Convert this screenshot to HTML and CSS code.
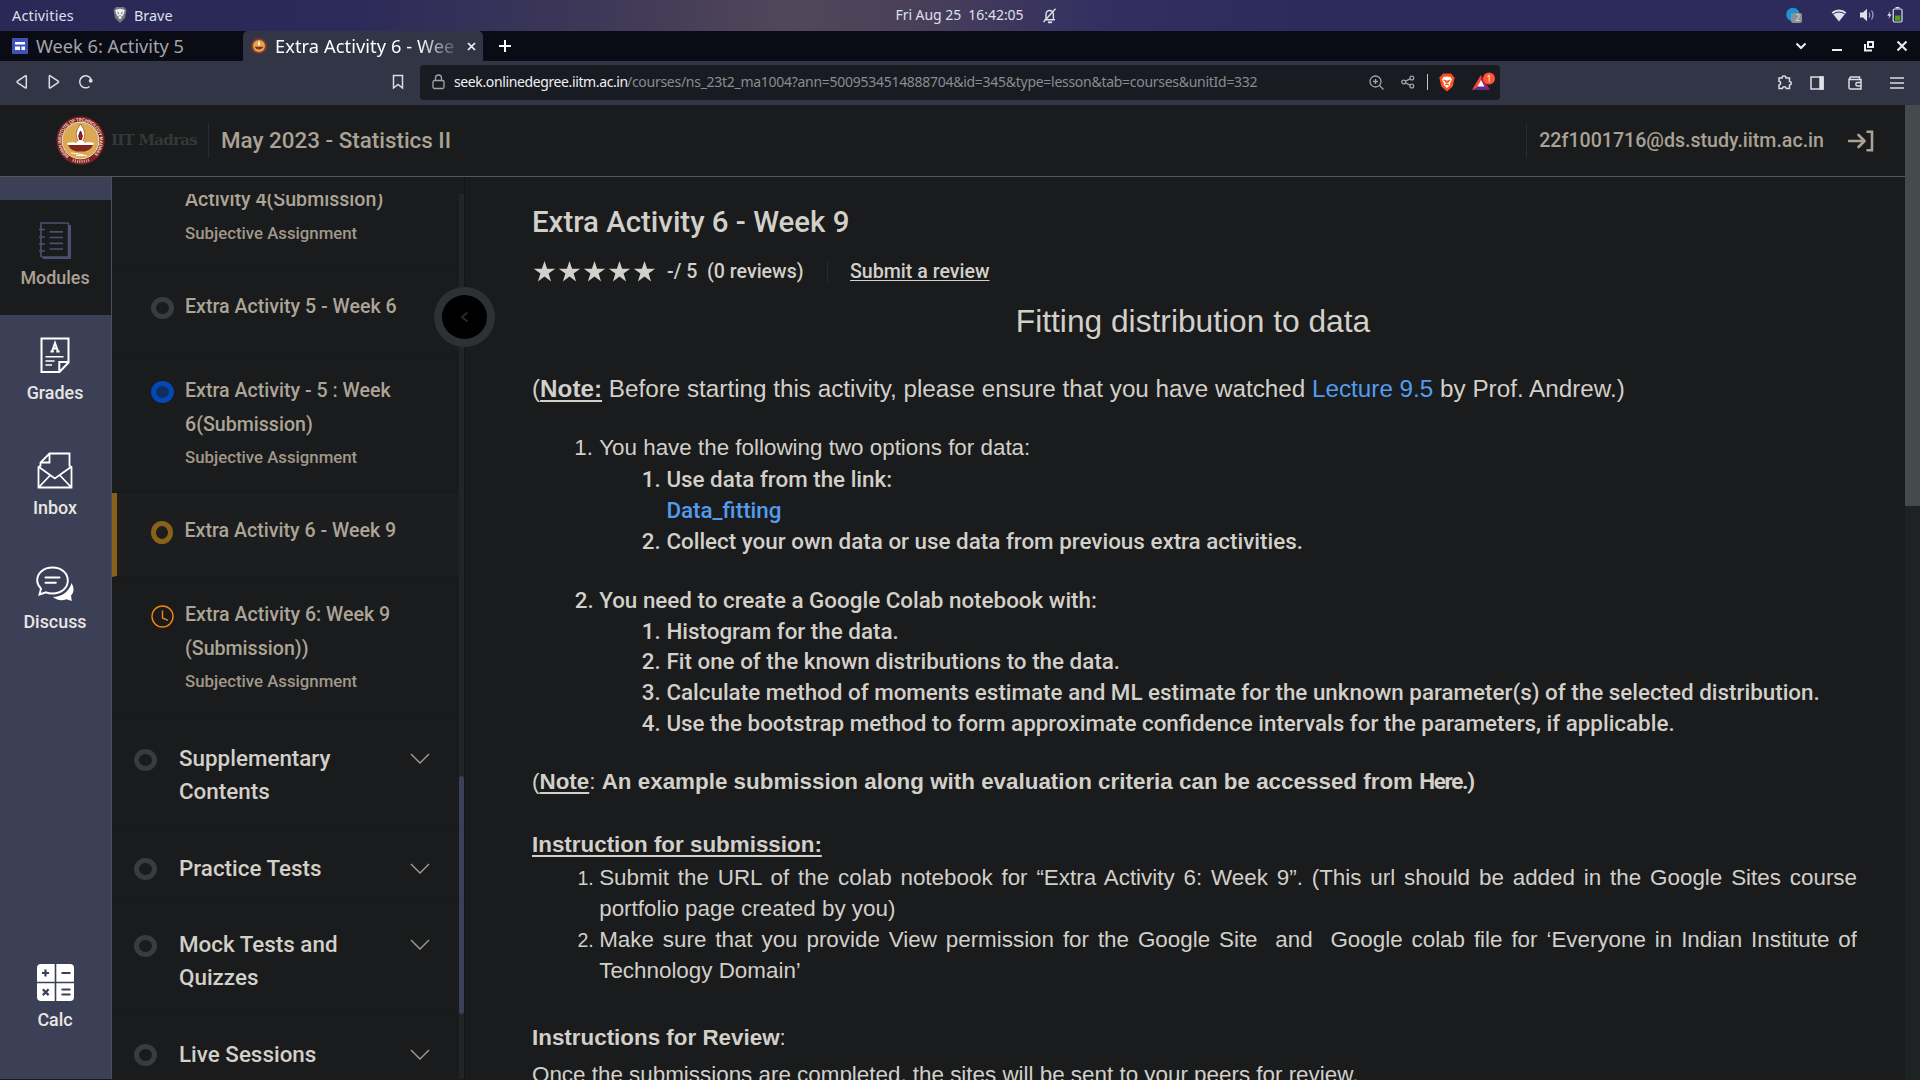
FILE: index.html
```html
<!DOCTYPE html>
<html lang="en">
<head>
<meta charset="utf-8">
<title>Extra Activity 6 - Week 9</title>
<link rel="stylesheet" href="styles.css">
</head>
<body>
<div class="topbar">
  <div class="topbar-side">
    <span class="activities">Activities</span>
    <svg class="lion" width="14" height="17" viewBox="0 0 14 17"><path d="M3 1h8l2.500 3-1.500 8-5 5-5-5L.5 4z" fill="#77787c"/><path d="M3.500 3.500l3.500-.8 3.500.8 1.300 1.500-1.500 3.800L7 13.500 3.700 8.800 2.200 5z" fill="#f4f4f4"/><path d="M4 6l2 1-1 1.500M10 6L8 7l1 1.500M5.500 10.500L7 9.500l1.500 1" stroke="#77787c" stroke-width=".9" fill="none"/></svg>
    <span class="app-name">Brave</span>
  </div>
  <div class="clock">
    <span class="clock-text">Fri Aug 25  16:42:05</span>
    <svg width="15" height="16" viewBox="0 0 15 16" fill="none" stroke="#dfe0ea" stroke-width="1.400"><path d="M2.500 11.800h10.500M4 11.500V6.200a3.700 3.700 0 0 1 7.400 0v5.300M13.500.8L1.500 14"/><path d="M6 14.300h4" stroke-width="1.800"/></svg>
  </div>
  <div class="tray">
    <svg class="tray-globe" width="16" height="16" viewBox="0 0 16 16"><circle cx="7" cy="7.500" r="6.800" fill="#1f93d2"/><rect x="5" y="6" width="11" height="10" rx="2" fill="#8d9196"/><text x="9.500" y="14" font-size="8" fill="#ddd" font-family="Noto Sans, sans-serif">2</text></svg>
    <svg class="tray-wifi" width="16" height="13" viewBox="0 0 16 13"><path d="M8 12.500L.6 3.300a11.500 11.500 0 0 1 14.800 0z" fill="#dfe0ea"/><path d="M2.200 5a9.500 9.500 0 0 1 11.600 0" stroke="#302d60" fill="none"/></svg>
    <svg class="tray-volume" width="15" height="14" viewBox="0 0 15 14"><path d="M0 4.500h3L7 .8v12.400L3 9.500H0z" fill="#dfe0ea"/><path d="M9 4.500q1.500 2.500 0 5M11.500 2.500q3 4.500 0 9" stroke="#a5a6bd" stroke-width="1.200" fill="none"/></svg>
    <svg class="tray-battery" width="16" height="16" viewBox="0 0 16 16"><path d="M3.200 4L.3 8.800h2L1.500 12l3-4.700h-2z" fill="#dfe0ea"/><path d="M8.500.7h4" stroke="#dfe0ea" stroke-width="1.400"/><rect x="6.200" y="2" width="8.800" height="13" rx="1.500" fill="none" stroke="#dfe0ea" stroke-width="1.200"/><path d="M8 8.500h5.300v5.200H8z" fill="#4fa30a"/></svg>
  </div>
</div>

<div class="tabstrip">
  <div class="tab">
    <svg width="16" height="16" viewBox="0 0 16 16"><path d="M0 0h16v16H0z" fill="#3f51b5"/><path d="M3 4h10v2.500H3zM3 8.500h5V12H3zM9.500 8.500H13V12H9.500z" fill="#fff"/></svg>
    <span class="tab-title">Week 6: Activity 5</span>
  </div>
  <div class="tab tab-active">
    <svg width="16" height="16" viewBox="0 0 16 16"><circle cx="8" cy="8" r="7.800" fill="#8a3a2a"/><circle cx="8" cy="8" r="6" fill="#e0a74b"/><path d="M8 2.800q2 3 0 5.500-2-2.500 0-5.500z" fill="#fff"/><path d="M3.500 8.700h9Q11 11.500 8 11.500T3.500 8.700z" fill="#8b2a1e"/></svg>
    <span class="tab-title tab-title-active">Extra Activity 6 - Wee</span>
    <svg class="tab-close" width="9" height="9" viewBox="0 0 9 9"><path d="M1 1l7 7M8 1L1 8" stroke="#f2f2f5" stroke-width="1.700"/></svg>
  </div>
  <svg class="new-tab" width="12" height="12" viewBox="0 0 12 12"><path d="M6 0v12M0 6h12" stroke="#fff" stroke-width="2"/></svg>
  <div class="window-buttons">
    <svg width="12" height="12" viewBox="0 0 12 12"><path d="M1.500 3.500L6 8l4.500-4.500" stroke="#eee" stroke-width="2" fill="none"/></svg>
    <svg class="minimize" width="12" height="12" viewBox="0 0 12 12"><path d="M1 10h10" stroke="#eee" stroke-width="2"/></svg>
    <svg class="restore" width="12" height="12" viewBox="0 0 12 12"><path d="M5 2h5v5H5zM2 4v6.500h7" stroke="#eee" stroke-width="2" fill="none"/></svg>
    <svg class="close" width="12" height="12" viewBox="0 0 12 12"><path d="M1.500 1.500l9 9M10.500 1.500l-9 9" stroke="#eee" stroke-width="2"/></svg>
  </div>
</div>

<div class="toolbar">
  <div class="nav-buttons">
    <svg width="12" height="16" viewBox="0 0 12 16"><path d="M10.300 2.200q0-1-1 -.3L1.500 7q-1 .8 0 1.600l7.800 5.200q1 .7 1-.3z"/></svg>
    <svg width="12" height="16" viewBox="0 0 12 16"><path d="M1.300 2.200q0-1 1-.3L10.100 7q1 .8 0 1.600l-7.800 5.200q-1 .7-1-.3z"/></svg>
    <svg width="16" height="16" viewBox="0 0 16 16"><path d="M11.500 12.500A6 6 0 1 1 13 5v1.500"/><circle cx="12.700" cy="6.700" r="1.200" fill="#e4e4ea"/></svg>
  </div>
  <svg class="bookmark" width="12" height="16" viewBox="0 0 12 16"><path d="M1.500 1.500h9v12.500L6 10.500 1.500 14z"/></svg>
  <div class="urlbox">
    <svg class="lock" width="13" height="16" viewBox="0 0 13 16"><rect x="1" y="6.500" width="11" height="8" rx="1.500"/><path d="M3.500 6.500V4a3 3 0 0 1 6 0v2.500"/></svg>
    <span class="url-host">seek.onlinedegree.iitm.ac.in</span><span class="url-path">/courses/ns_23t2_ma1004?ann=5009534514888704&amp;id=345&amp;type=lesson&amp;tab=courses&amp;unitId=332</span>
    <svg class="url-zoom" width="15" height="15" viewBox="0 0 15 15"><circle cx="6.500" cy="6.500" r="5.500"/><path d="M10.500 10.500l4 4M4 6.500h5M6.500 4v5"/></svg>
    <svg class="url-share" width="14" height="14" viewBox="0 0 14 14"><circle cx="2.700" cy="7" r="1.900"/><circle cx="10.800" cy="3" r="1.900"/><circle cx="10.800" cy="11" r="1.900"/><path d="M4.400 6.200l4.700-2.300M4.400 7.800l4.700 2.300"/></svg>
    <span class="url-divider"></span>
    <svg class="shield" width="16" height="19" viewBox="0 0 16 19"><path d="M4 .5h8L14 3l1.700 1.500-2 9L8 18.500l-5.700-5-2-9L2 3z" fill="#fb4f1d"/><path d="M4.500 4L8 3.400l3.500.6L13 6.500l-2 4 .3 1.500L8 15l-3.300-3 .3-1.500-2-4z" fill="#fff"/><path d="M4.500 7l2.500.8L6.300 9.500M11.500 7L9 7.800l.7 1.700M8 8v3.500M6 12l2-1 2 1" stroke="#fb4f1d" fill="none"/></svg>
    <svg class="rewards" width="24" height="20" viewBox="0 0 24 20"><path d="M9 3l9 15H0z" fill="#5b2e91"/><path d="M9 3L0 18l5-2.500L9 8z" fill="#ff4724"/><path d="M9 3l9 15-5-2.500L9 8z" fill="#9e1f63"/><path d="M9 8l3.500 6.500h-7z" fill="#fff"/><circle cx="17" cy="6.500" r="6" fill="#ff5630"/><text x="17" y="9.800" font-size="9" fill="#fff" text-anchor="middle" font-family="Noto Sans, sans-serif">1</text></svg>
  </div>
  <div class="ext-buttons">
    <svg width="15" height="15" viewBox="0 0 15 15"><path d="M2 3h3a2 2 0 1 1 4 0h3.500v3.500a1.800 1.800 0 1 1 0 3.600v3.500H9.300q-.3-1.800-2-1.800t-2 1.800H2V10q1.700-.3 1.700-1.900T2 6.300z"/></svg>
    <svg class="ext-panel" width="14" height="14" viewBox="0 0 14 14"><rect x="1" y="1" width="12" height="12"/><path d="M10 1h3v12h-3z" fill="#e4e4ea"/></svg>
    <svg class="ext-wallet" width="14" height="14" viewBox="0 0 14 14"><path d="M11.500 3.500V1H2.500a1.500 1.500 0 0 0 0 2.500H13V13H2.500A1.500 1.500 0 0 1 1 11.500v-9M13 6.500H9.500a1.700 1.700 0 0 0 0 3.400H13"/></svg>
    <svg class="ext-menu" width="14" height="14" viewBox="0 0 14 14"><path d="M0 2h14M0 7h14M0 12h14"/></svg>
  </div>
</div>

<div class="viewport">
  <div class="page">
    <header class="header">
      <svg class="logo" width="49" height="49" viewBox="0 0 49 49">
        <defs><path id="rim" d="M13.200 40A19.200 19.200 0 1 1 35.800 40"/></defs>
        <circle cx="24.500" cy="24.500" r="24.200" fill="#7c211b"/>
        <text class="rim-text" textLength="93"><textPath href="#rim" textLength="93">INDIAN INSTITUTE OF TECHNOLOGY MADRAS</textPath></text>
        <path d="M33 43.800A21.200 21.200 0 0 1 16 43.800" fill="none" stroke="#e0c6bb" stroke-width="3" stroke-dasharray="1.200 1" opacity=".8"/>
        <circle cx="24.500" cy="24.500" r="18.400" fill="#dca851" stroke="#f1e3c8" stroke-width="1"/>
        <path d="M24.500 8q7.500 10 1.800 18h-3.600q-5.700-8 1.800-18z" fill="#fff" stroke="#5e2018" stroke-width=".5"/>
        <path d="M24.500 15q3 5 1 8.500h-2q-2-3.500 1-8.500z" fill="#c1121c" stroke="#4a2014"/>
        <path d="M11 27q6-1.500 9.500 0l1.200-2h5.600l1.200 2q3.500-1.500 9.500 0-1 4-8 6.500H19q-7-2.500-8-6.500z" fill="#fff"/>
        <path d="M12 29h25q-2 5-8.500 6.500h-8Q14 34 12 29z" fill="#84261b"/>
        <path d="M15 37l8 1 8 2M20 39.500l8 .2" stroke="#fff" stroke-width="1" fill="none"/>
      </svg>
      <span class="brand">IIT Madras</span>
      <span class="course">May 2023 - Statistics II</span>
      <span class="account">22f1001716@ds.study.iitm.ac.in</span>
      <svg class="logout" width="26" height="24" viewBox="0 0 26 24" fill="none" stroke="#aaa294" stroke-width="2.600"><path d="M1 12h15M10.500 6l6 6-6 6" stroke-linecap="round" stroke-linejoin="round"/><path d="M19.500 2.700H24v18.600h-4.500" stroke-linecap="round"/></svg>
    </header>
    <div class="body">
      <nav class="rail">
        <div class="rail-item rail-current">
          <svg width="32" height="37" viewBox="0 0 32 37" fill="none" stroke="#4a5173" stroke-width="1.600"><path d="M2 1h26.500q1 0 1 1v33H3q-1 0-1-1zM30.500 3v32.500M5 36h26" /><path d="M31 3v33H4" stroke-width="2"/><path d="M0 7.500h6M0 15h6M0 22h6M0 29h6M10.500 9.800H24M10.500 15.500H24M10.500 21.300H24M10.500 27H24" stroke-width="1.700"/></svg>
          <span>Modules</span>
        </div>
        <div class="rail-item">
          <svg width="30" height="37" viewBox="0 0 30 37" fill="none" stroke="#fff" stroke-width="2"><path d="M1.500 1.500h27v24l-9 9.500h-18zM28.500 25h-9.200v10"/><path d="M5.500 19.800h18M5.500 24h9M5.500 28H12" stroke-width="1.500"/><path d="M10.500 14.500h3.300M16.300 14.500h3.300M12 14.500l3-8.500 3 8.500M13 11.500h4" stroke-width="2"/></svg>
          <span>Grades</span>
        </div>
        <div class="rail-item">
          <svg width="36" height="37" viewBox="0 0 36 37" fill="none" stroke="#fff" stroke-width="1.800"><path d="M3.500 14V10.500L12.500 1.500h20V14M12.500 1.500v9h-9"/><path d="M4 13.500L1.500 15v20.500h33V15l-2.500-1.500M2 15l15.800 11.500L34 15M2 35l11-11.500M34 35L23 23.500"/></svg>
          <span>Inbox</span>
        </div>
        <div class="rail-item">
          <svg width="38" height="37" viewBox="0 0 38 37"><path d="M35.500 17c3 5 2.500 9.500-.5 12.500l.8 5.500-5.300-1.700c-5 1.700-10.500.8-13.500-2.300C25 31 33 26 35.500 17z" fill="#fff"/><path d="M16.500 1.500c9 0 15.300 5.500 15.300 13S25.500 27.500 16.500 27.500c-2.500 0-4.500-.3-6.500-1.200L3.500 28.500l1.500-5.800C2.500 20 1.200 18 1.200 14.500c0-7.500 6.300-13 15.300-13z" fill="#3c4056" stroke="#fff" stroke-width="1.900"/><path d="M9.500 11.500h14M9.500 16.800h10.300" stroke="#fff" stroke-width="2" stroke-linecap="round"/></svg>
          <span>Discuss</span>
        </div>
        <div class="rail-item rail-bottom">
          <svg width="37" height="37" viewBox="0 0 37 37"><rect width="37" height="37" rx="4" fill="#fff"/><path d="M18.500 0v37M0 18.500h37" stroke="#3c4056" stroke-width="1.600"/><path d="M5 9h7M8.500 5.500v7M24.500 9h9M5.800 25.300l5.800 5.800M11.600 25.300l-5.800 5.800M24.500 25.500h9M24.500 30.500h9" stroke="#3c4056" stroke-width="2.200"/></svg>
          <span>Calc</span>
        </div>
      </nav>

      <aside class="lessons">
        <div class="lesson-list">
          <div class="lesson lesson-first"><div class="lesson-text"><p>Activity 4(Submission)</p><p class="kind">Subjective Assignment</p></div></div>
          <div class="lesson"><span class="ring"></span><div class="lesson-text"><p>Extra Activity 5 - Week 6</p></div></div>
          <div class="lesson"><span class="ring ring-done"></span><div class="lesson-text"><p>Extra Activity - 5 : Week<br>6(Submission)</p><p class="kind">Subjective Assignment</p></div></div>
          <div class="lesson lesson-active"><span class="ring ring-active"></span><div class="lesson-text"><p>Extra Activity 6 - Week 9</p></div></div>
          <div class="lesson"><svg class="due" width="23" height="23" viewBox="0 0 23 23" fill="none" stroke="#ef860b" stroke-width="1.400"><circle cx="11.500" cy="11.500" r="10.500"/><path d="M11.500 5.500V13l5.500 2.300"/></svg><div class="lesson-text"><p>Extra Activity 6: Week 9<br>(Submission))</p><p class="kind">Subjective Assignment</p></div></div>
          <div class="section"><span class="ring"></span><p>Supplementary<br>Contents</p><svg class="chev" width="20" height="11" viewBox="0 0 20 11"><path d="M1 1l9 9 9-9"/></svg></div>
          <div class="section"><span class="ring"></span><p>Practice Tests</p><svg class="chev" width="20" height="11" viewBox="0 0 20 11"><path d="M1 1l9 9 9-9"/></svg></div>
          <div class="section"><span class="ring"></span><p>Mock Tests and<br>Quizzes</p><svg class="chev" width="20" height="11" viewBox="0 0 20 11"><path d="M1 1l9 9 9-9"/></svg></div>
          <div class="section"><span class="ring"></span><p>Live Sessions</p><svg class="chev" width="20" height="11" viewBox="0 0 20 11"><path d="M1 1l9 9 9-9"/></svg></div>
        </div>
        <div class="list-track"><div class="list-thumb"></div></div>
        <div class="collapse"><svg width="9" height="12" viewBox="0 0 9 12"><path d="M7.500 1.500L2 6l5.500 4.500" stroke="#26292b" stroke-width="2" fill="none"/></svg></div>
      </aside>

      <main class="content">
        <h1>Extra Activity 6 - Week 9</h1>
        <div class="rating">
          <svg class="stars" width="124" height="22" viewBox="0 0 124 22" fill="#d3cfc9"><defs><path id="star" d="M11.500 0l2.600 7.800h8.100l-6.600 4.800 2.500 7.800-6.600-4.800-6.600 4.800 2.500-7.800L.8 7.800h8.100z"/></defs><use href="#star"/><use href="#star" x="25"/><use href="#star" x="50"/><use href="#star" x="75"/><use href="#star" x="100"/></svg>
          <span class="score">-/ 5</span>
          <span class="reviews">(0 reviews)</span>
          <span class="submit-review">Submit a review</span>
        </div>
        <h2>Fitting distribution to data</h2>
        <p class="note">(<b><u>Note:</u></b> Before starting this activity, please ensure that you have watched <a>Lecture 9.5</a> by Prof. Andrew.)</p>
        <ol class="steps">
          <li>You have the following two options for data:
            <ol>
              <li>Use data from the link:<br><a>Data_fitting</a></li>
              <li>Collect your own data or use data from previous extra activities.</li>
            </ol>
          </li>
          <li class="medium">You need to create a Google Colab notebook with:
            <ol>
              <li>Histogram for the data.</li>
              <li>Fit one of the known distributions to the data.</li>
              <li>Calculate method of moments estimate and ML estimate for the unknown parameter(s) of the selected distribution.</li>
              <li>Use the bootstrap method to form approximate confidence intervals for the parameters, if applicable.</li>
            </ol>
          </li>
        </ol>
        <p class="example">(<b><u>Note</u></b>: <b>An example submission along with evaluation criteria can be accessed from <span class="here">Here.)</span></b></p>
        <p class="instruction"><b><u>Instruction for submission:</u></b></p>
        <ol class="submission">
          <li><span>Submit the URL of the colab notebook for “Extra Activity 6: Week 9”. (This url should be added in the Google Sites course portfolio page created by you)</span></li>
          <li><span>Make sure that you provide View permission for the Google Site&nbsp; and&nbsp; Google colab file for ‘Everyone in Indian Institute of Technology Domain’</span></li>
        </ol>
        <p class="review-head"><b>Instructions for Review</b>:</p>
        <p class="review-text">Once the submissions are completed, the sites will be sent to your peers for review.</p>
      </main>
    </div>
  </div>
  <div class="page-track"><div class="page-thumb"></div></div>
</div>
</body>
</html>
```
FILE: styles.css
```css
* { box-sizing: border-box; }
body { margin: 0; width: 1920px; height: 1080px; overflow: hidden; display: flex; flex-direction: column; background: #191b1c; font-family: Roboto, sans-serif; color: #d3cfc9; }
svg { display: block; flex: none; }
p, h1, h2, ol { margin: 0; padding: 0; font-weight: inherit; }

/* desktop bar */
.topbar { flex: none; height: 31px; display: grid; grid-template-columns: 1fr auto 1fr; align-items: start; background: linear-gradient(90deg, #2a2857 0, #2c2a59 350px, #3e3858 600px, #52475a 790px, #4a4159 900px, #332f61 1100px, #2d2b5c 1300px, #2d2b5c 100%); color: #dfe0ea; font: 14.400px/20px "Noto Sans", sans-serif; }
.topbar-side { display: flex; padding: 6px 0 0 12px; }
.activities { letter-spacing: .2px; width: 101px; }
.app-name { letter-spacing: 0; margin-left: 7px; }
.clock { display: flex; padding: 5px 0 0 32px; gap: 18px; font-size: 14px; }
.clock svg { margin-top: 3px; }
.clock-text { white-space: pre; width: 128px; letter-spacing: -.05px; }
.tray { display: flex; justify-content: flex-end; padding: 7px 17px 0 0; }
.tray-globe { margin-right: 29px; }
.tray-wifi { margin: 2px 13px 0 0; }
.tray-volume { margin: 1px 12px 0 0; }

/* tabs */
.tabstrip { flex: none; height: 30px; display: flex; background: #0b0b15; font: 18.200px/30px "Noto Sans", sans-serif; color: #a3a4ab; }
.tab { display: flex; width: 243px; padding-left: 12px; }
.tab svg { margin-top: 7px; }
.tab-title { margin: 0 0 0 8px; white-space: nowrap; }
.tab-active { width: 240px; padding-left: 8px; background: #323545; border-radius: 5px 5px 0 0; color: #fff; }
.tab-title-active { width: 184px; letter-spacing: .1px; -webkit-mask-image: linear-gradient(90deg, #000 78%, transparent 102%); mask-image: linear-gradient(90deg, #000 78%, transparent 102%); }
.tab .tab-close { margin: 11px 0 0 8px; }
.new-tab { margin: 9px 0 0 16px; }
.window-buttons { display: flex; margin: 9px 12px 0 auto; }
.minimize { margin-left: 24px; }
.restore { margin-left: 20px; }
.close { margin-left: 21px; }

/* toolbar */
.toolbar { flex: none; height: 44px; display: flex; background: #323545; }
.toolbar svg { fill: none; stroke: #dcdce3; stroke-width: 1.500; }
.nav-buttons { display: flex; gap: 20px; width: 376px; padding: 13px 0 0 16px; }
.nav-buttons svg:last-child { margin-left: -2px; }
.bookmark { margin: 13px 16px 0 16px; }
.urlbox { width: 1080px; height: 35px; margin-top: 4px; display: flex; border-radius: 4px; background: #191b22; font: 14px/34px "Noto Sans", sans-serif; white-space: nowrap; }
.toolbar .urlbox svg { stroke: #a2a3a9; stroke-width: 1.300; }
.lock { margin: 9px 9px 0 12px; }
.url-host { width: 173px; color: #f0f0f2; letter-spacing: -.38px; }
.url-path { width: 743px; color: #8b8c91; letter-spacing: -.28px; }
.url-zoom { margin: 10px 0 0 -1px; }
.url-share { margin: 10px 0 0 17px; }
.url-divider { width: 1px; height: 16px; margin: 9px 11px 0 12px; background: #c6c6cc; }
.toolbar .urlbox .shield, .toolbar .urlbox .rewards { stroke: none; margin-top: 8px; }
.toolbar .urlbox .rewards { margin: 7px 0 0 17px; }
.ext-buttons { display: flex; margin: 14px 0 0 277px; }
.ext-panel { margin: 1px 0 0 18px; }
.ext-wallet { margin: 1px 0 0 24px; }
.ext-menu { margin: 1px 0 0 28px; }

/* page */
.viewport { flex: 1; min-height: 0; display: flex; }
.page { width: 1905px; display: flex; flex-direction: column; }
.page-track { width: 15px; background: #1e2223; }
.page-thumb { height: 401px; background: #454a4d; }
.header { flex: none; height: 72px; display: flex; padding-left: 56px; border-bottom: 1px solid #505759; font-weight: 500; color: #aaa294; }
.logo { margin-top: 11px; }
.rim-text { font: bold 4.700px "Liberation Sans", sans-serif; fill: #f0dfd6; }
.brand { width: 103px; padding-left: 6px; font: bold 15px/71px "DejaVu Serif", serif; letter-spacing: -.73px; color: #363838; white-space: nowrap; }
.course, .account { height: 35px; margin-top: 18px; border-left: 1px solid #282a36; padding-left: 12px; font-size: 22.400px; line-height: 34px; }
.account { margin-left: auto; font-size: 19.600px; line-height: 35px; }
.logout { margin: 24px 31px 0 24px; }
.body { flex: 1; min-height: 0; display: flex; }

/* left rail */
.rail { width: 112px; margin-bottom: 1px; padding-top: 23px; display: flex; flex-direction: column; background: #3c4056; border-right: 1px solid #4a4e66; font-weight: 500; font-size: 17.900px; line-height: 24px; color: #e8e6e3; }
.rail-item { height: 114.800px; padding: 22px 1px 0 0; display: flex; flex-direction: column; align-items: center; gap: 7px; }
.rail-current { background: #191b1c; color: #aaa294; }
.rail-bottom { margin-top: auto; margin-bottom: 22px; }

/* lesson list */
.lessons { position: relative; width: 353px; padding-top: 17px; margin-bottom: 1px; display: flex; border-right: 1px solid #131516; }
.lesson-list { width: 347px; overflow: hidden; }
.lesson { display: flex; min-height: 84px; padding: 21.500px 0 17px 39px; border-bottom: 1px solid #16181a; font-weight: 500; font-size: 19.600px; line-height: 33.600px; color: #aca497; }
.lesson-first { margin-top: -32.200px; padding-left: 73px; }
.lesson-text { white-space: nowrap; }
.kind { font-size: 16.800px; color: #a19889; }
.ring { flex: none; width: 23px; height: 22px; margin: 6.500px 11px 0 0; border: 5px solid #373c3e; border-radius: 50%; }
.ring-done { border-color: #0347b8; background: #102e5e; }
.ring-active { width: 22px; height: 23px; border-color: #8a6119; }
.lesson-active { padding-left: 34px; border-left: 5px solid #8a6119; background: #1b1d1e; }
.lesson-active .lesson-text { margin-left: .5px; }
.due { margin: 7px 11px 0 0; }
.section { display: flex; padding: 25.200px 29px 17.200px 22px; border-bottom: 1px solid #16181a; font-weight: 500; font-size: 22.400px; line-height: 33.100px; }
.section .ring { margin-right: 22px; }
.chev { margin: 11px 0 0 auto; fill: none; stroke: #a59d90; stroke-width: 1.400; }
.list-track { width: 5px; background: #222426; }
.list-thumb { height: 238px; margin-top: 582px; border-radius: 3px; background: #3c4056; }
.collapse { position: absolute; left: 322px; top: 110px; width: 61px; height: 60px; border: 8px solid #2d3133; border-radius: 50%; background: #000; display: flex; align-items: center; justify-content: center; z-index: 2; }

/* lesson content */
.content { width: 1392px; height: 903px; overflow: hidden; padding: 25px 0 0 67px; font-family: "Liberation Sans", sans-serif; font-size: 22.400px; line-height: 30.900px; }
h1 { font: 500 29.400px/40px Roboto, sans-serif; }
.rating { display: flex; margin-top: 15px; height: 30px; font: 500 19.600px/30px Roboto, sans-serif; }
.stars { margin: 4px 10px 0 1px; }
.score { width: 40px; white-space: nowrap; }
.reviews { width: 120px; }
.submit-review { height: 22px; margin-top: 4px; padding-left: 22px; border-left: 1px solid #26283a; line-height: 22px; text-decoration: underline; text-underline-offset: 2px; }
h2 { margin-top: 12px; padding-right: 3px; font-size: 31.730px; line-height: 44px; text-align: center; }
.note { margin-top: 29px; font-size: 24.250px; line-height: 34px; }
a { color: #539bed; }
u { text-underline-offset: 2.500px; }
.steps { margin-top: 27px; }
ol { padding-left: 67.200px; }
.steps > li { margin-bottom: 28px; }
.steps ol, .medium { font-family: Roboto, sans-serif; font-weight: 500; }
.example { margin-top: -1px; }
.here { font-family: Roboto, sans-serif; letter-spacing: -1.300px; }
.instruction { margin-top: 32px; }
.submission { margin-top: 2px; font-size: 19.600px; text-align: justify; }
.submission span { font-size: 22.400px; }
.review-head { margin-top: 36px; }
.review-text { margin-top: 6.500px; }
```
